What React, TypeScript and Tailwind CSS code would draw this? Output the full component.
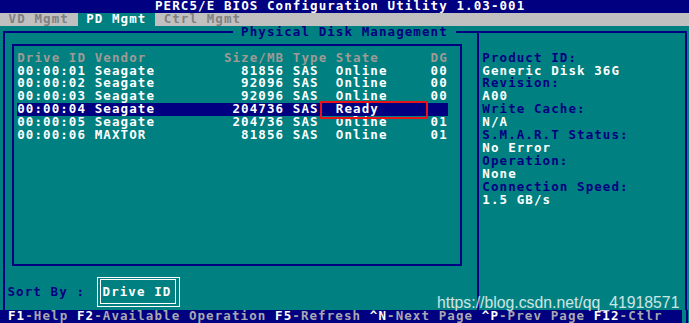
import React from "react";

const mono =
  "font-['DejaVu_Sans_Mono',monospace] font-bold text-[12.5px] tracking-[1.087px] leading-[12.92px]";

type Disk = { id: string; vendor: string; size: string; state: string; dg: string };

const disks: Disk[] = [
  { id: "00:00:01", vendor: "Seagate", size: "81856", state: "Online", dg: "00" },
  { id: "00:00:02", vendor: "Seagate", size: "92096", state: "Online", dg: "00" },
  { id: "00:00:03", vendor: "Seagate", size: "92096", state: "Online", dg: "00" },
  { id: "00:00:04", vendor: "Seagate", size: "204736", state: "Ready", dg: "" },
  { id: "00:00:05", vendor: "Seagate", size: "204736", state: "Online", dg: "01" },
  { id: "00:00:06", vendor: "MAXTOR", size: "81856", state: "Online", dg: "01" },
];

const rowText = (d: Disk) =>
  d.id +
  " " +
  d.vendor.padEnd(15) +
  d.size.padStart(7) +
  " SAS  " +
  d.state.padEnd(11) +
  d.dg.padEnd(2);

const header = "Drive ID Vendor" + " ".repeat(9) + "Size/MB Type State" + " ".repeat(6) + "DG";

const info: [string, string][] = [
  ["Product ID:", "Generic Disk 36G"],
  ["Revision:", "A00"],
  ["Write Cache:", "N/A"],
  ["S.M.A.R.T Status:", "No Error"],
  ["Operation:", "None"],
  ["Connection Speed:", "1.5 GB/s"],
];

const footer: [string, string][] = [
  ["F1", "-Help "],
  ["F2", "-Available Operation "],
  ["F5", "-Refresh "],
  ["^N", "-Next Page "],
  ["^P", "-Prev Page "],
  ["F12", "-Ctlr"],
];

export default function App() {
  return (
    <div className={`relative w-[689px] h-[323px] overflow-hidden bg-[#008080] flex flex-col ${mono}`}>
      {/* Title bar */}
      <div className="h-[12.92px] shrink-0 bg-[#000080] text-white whitespace-pre pl-[155px]">
        PERC5/E BIOS Configuration Utility 1.03-001
      </div>

      {/* Tabs */}
      <div className="h-[12.92px] shrink-0 bg-[#c0c0c0] flex whitespace-pre text-[#808080]">
        <span> VD Mgmt </span>
        <span className="bg-[#008080] text-white"> PD Mgmt </span>
        <span> Ctrl Mgmt</span>
      </div>

      {/* Main */}
      <div className="h-[284.24px] shrink-0">
        <div className="mt-[5.46px] ml-[3px] w-[684px] h-[278.78px] border-2 border-b-0 border-[#000080] flex">
          {/* Left part */}
          <div className="w-[472px] shrink-0 flex flex-col">
            <div className="-mt-[7.46px] ml-[227.5px] h-[12.92px] w-fit bg-[#008080] text-[#000080] whitespace-pre">
              {" Physical Disk Management "}
            </div>
            <div className="mt-[5.46px] ml-[6.5px] w-[450.5px] h-[221.8px] shrink-0 border-2 border-[#000080] pt-[5.46px] pl-[3.7px]">
              <div className="h-[12.92px] whitespace-pre text-[#a09a96]">{header}</div>
              {disks.map((d) => {
                const sel = d.state === "Ready";
                return (
                  <div key={d.id} className="h-[12.92px] flex">
                    <span className={`whitespace-pre text-white ${sel ? "bg-[#000080]" : ""}`}>{rowText(d)}</span>
                  </div>
                );
              })}
            </div>
            <div className="mt-[11px] flex items-center">
              <span className="ml-[2.5px] text-[#000080] whitespace-pre">Sort By :</span>
              <div className="ml-[12px] w-[83px] h-[30px] border border-white pt-[1.5px] pl-[1.5px] pr-[3.5px] pb-[1.5px] flex">
                <div className="flex-1 border border-white flex items-center pl-[2px] text-white whitespace-pre">
                  Drive ID
                </div>
              </div>
            </div>
          </div>

          {/* Right panel */}
          <div className="flex-1 border-l-2 border-[#000080] pl-[3.3px] pt-[18.38px]">
            {info.map(([k, v]) => (
              <div key={k}>
                <div className="h-[12.92px] whitespace-pre text-[#000080]">{k}</div>
                <div className="h-[12.92px] whitespace-pre text-white">{v}</div>
              </div>
            ))}
          </div>
        </div>
      </div>

      {/* Footer */}
      <div className="h-[12.92px] shrink-0 flex">
        <div className="w-[682px] shrink-0 bg-[#000080] pl-[8px] whitespace-pre">
          {footer.map(([k, v]) => (
            <span key={k}>
              <span className="text-white">{k}</span>
              <span className="text-[#a8a8b0]">{v}</span>
            </span>
          ))}
        </div>
        <div className="w-[3.7px] shrink-0" />
        <div className="w-[2px] shrink-0 bg-[#000080]" />
      </div>

      {/* Red annotation box */}
      <div className="absolute left-[320px] top-[101px] w-[108px] h-[18px] border-2 border-[#e8141b]" />

      {/* Watermark */}
      <div className="absolute left-[437px] top-[295px] font-['Liberation_Sans',Arial,sans-serif] font-normal tracking-normal text-[15.8px] leading-none text-white/80 whitespace-pre">
        https://blog.csdn.net/qq_41918571
      </div>
    </div>
  );
}
